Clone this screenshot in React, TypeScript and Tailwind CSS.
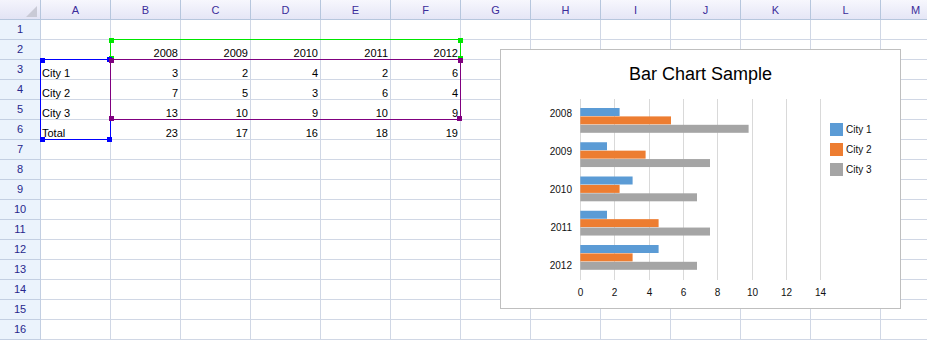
import React from "react";

const COLS = ["A", "B", "C", "D", "E", "F", "G", "H", "I", "J", "K", "L", "M"];

const DATA: Record<number, (string | null)[]> = {
  2: [null, "2008", "2009", "2010", "2011", "2012"],
  3: ["City 1", "3", "2", "4", "2", "6"],
  4: ["City 2", "7", "5", "3", "6", "4"],
  5: ["City 3", "13", "10", "9", "10", "9"],
  6: ["Total", "23", "17", "16", "18", "19"],
};

const FONT = { fontFamily: '"Liberation Sans", Arial, sans-serif' };

function Cell({ value, col }: { value: string | null; col: number }) {
  const isText = col === 0;
  return (
    <div
      className={`flex h-[20px] w-[70px] shrink-0 items-end border-b border-r border-[#d0d7e5] text-[11px] leading-[12px] text-black ${
        isText ? "justify-start pl-[1px]" : "justify-end pr-[2px]"
      }`}
    >
      {value ?? ""}
    </div>
  );
}

const BLUE = "#5b9bd5";
const ORANGE = "#ed7d31";
const GRAY = "#a5a5a5";

const BARS: [number, number, number][] = [
  [39.3, 90.7, 168.3],
  [26.7, 65.3, 129.7],
  [52.3, 39.3, 116.7],
  [26.7, 78.3, 129.7],
  [78.3, 52.3, 116.7],
];

const YEARS = ["2008", "2009", "2010", "2011", "2012"];

function Chart() {
  const gridXs = Array.from({ length: 8 }, (_, i) => Math.round(580 + i * 34.33) + 0.5);
  const colors = [BLUE, ORANGE, GRAY];
  return (
    <div className="absolute left-[500px] top-[49px] h-[260px] w-[401px] border border-[#bfbfbf] bg-white">
      <svg width={399} height={258} viewBox="501 50 399 258" style={FONT}>
        <text x={700.5} y={80} textAnchor="middle" fontSize={18} fill="#000">
          Bar Chart Sample
        </text>
        {gridXs.map((x, i) => (
          <line key={i} x1={x} x2={x} y1={99} y2={280} stroke="#d9d9d9" strokeWidth={1} />
        ))}
        {BARS.map((group, gi) => {
          const g = 108 + gi * 34.25;
          return group.map((w, bi) => (
            <rect key={`${gi}-${bi}`} x={580.3} y={g + bi * 8.4} width={w} height={8} fill={colors[bi]} />
          ));
        })}
        {YEARS.map((y, i) => (
          <text key={y} x={572} y={117 + i * 38.1} textAnchor="end" fontSize={10} fill="#111">
            {y}
          </text>
        ))}
        {gridXs.map((x, i) => (
          <text key={i} x={x} y={295.5} textAnchor="middle" fontSize={10} fill="#111">
            {i * 2}
          </text>
        ))}
        {["City 1", "City 2", "City 3"].map((c, i) => (
          <g key={c}>
            <rect x={830} y={123 + i * 20} width={13} height={13} fill={colors[i]} />
            <text x={846} y={133 + i * 20} fontSize={10} fill="#111">
              {c}
            </text>
          </g>
        ))}
      </svg>
    </div>
  );
}

function Handle({ x, y, color }: { x: number; y: number; color: string }) {
  return (
    <div
      className="absolute h-[5px] w-[5px]"
      style={{ left: x, top: y, backgroundColor: color }}
    />
  );
}

export default function App() {
  const rows = Array.from({ length: 16 }, (_, i) => i + 1);
  return (
    <div className="relative h-[340px] w-[927px] overflow-hidden bg-white" style={FONT}>
      <div className="flex w-max flex-col">
        {/* column header */}
        <div className="flex h-[20px]">
          <div className="relative h-[20px] w-[41px] shrink-0 border-b border-r border-[#b6c6dd] bg-gradient-to-b from-[#f4f4fc] to-[#e3e4f5]">
            <svg className="absolute left-[26px] top-[6px]" width={11} height={11} viewBox="0 0 11 11">
              <polygon points="11,0 11,11 0,11" fill="#c9cad6" />
            </svg>
          </div>
          {COLS.map((c) => (
            <div
              key={c}
              className="flex h-[20px] w-[70px] shrink-0 items-center justify-center border-b border-r border-[#b6c6dd] bg-gradient-to-b from-[#f7f7fd] to-[#e5e6f6] pt-[1px] text-[11px] text-[#3b2c9a]"
            >
              {c}
            </div>
          ))}
        </div>
        {rows.map((r) => (
          <div key={r} className="flex h-[20px]">
            <div className="flex h-[20px] w-[41px] shrink-0 items-center justify-center border-b border-r border-[#c3cfe2] bg-[#ebf3fc] text-[11px] text-[#27278c]">
              {r}
            </div>
            {COLS.map((c, ci) => (
              <Cell key={c} col={ci} value={DATA[r]?.[ci] ?? null} />
            ))}
          </div>
        ))}
      </div>

      {/* selection overlays */}
      <div className="absolute left-[110px] top-[39px] h-[21px] w-[351px] border border-[#00e600]" />
      <div className="absolute left-[40px] top-[59px] h-[81px] w-[71px] border border-[#0000ff]" />
      <div className="absolute left-[110px] top-[59px] h-[61px] w-[351px] border border-[#800080]" />

      <Handle x={109} y={38} color="#00e600" />
      <Handle x={458} y={38} color="#00e600" />
      <Handle x={109} y={56} color="#00e600" />
      <Handle x={458} y={56} color="#00e600" />

      <Handle x={40} y={58} color="#0000ff" />
      <Handle x={107} y={57} color="#0000ff" />
      <Handle x={40} y={137} color="#0000ff" />
      <Handle x={107} y={137} color="#0000ff" />

      <Handle x={109} y={58} color="#800080" />
      <Handle x={458} y={58} color="#800080" />
      <Handle x={109} y={116} color="#800080" />
      <Handle x={457} y={116} color="#800080" />

      <Chart />
    </div>
  );
}
